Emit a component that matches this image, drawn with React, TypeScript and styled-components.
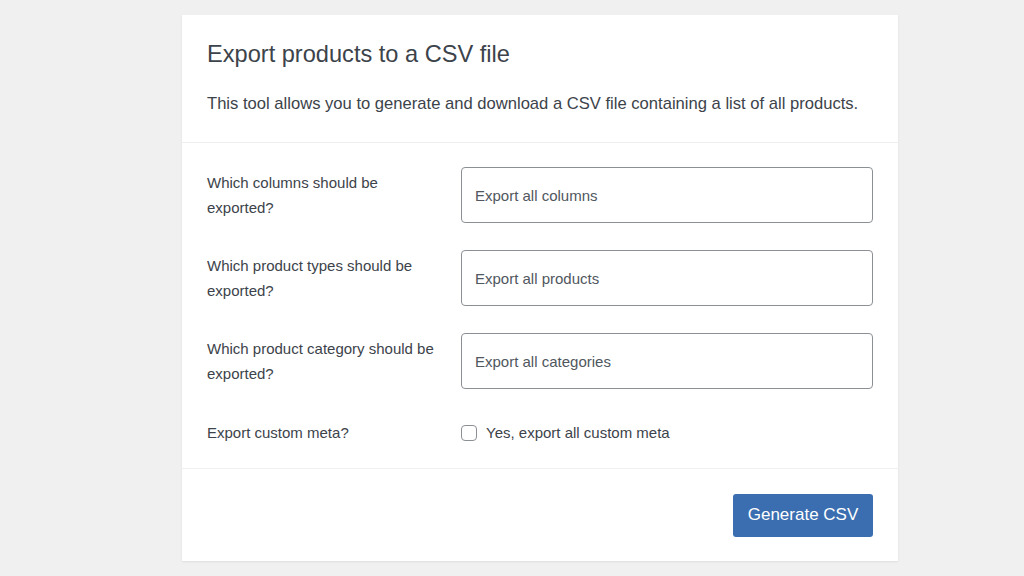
import styled, { createGlobalStyle } from "styled-components";

const Global = createGlobalStyle`
  body {
    margin: 0;
    background: #f0f0f1;
    font-family: "Liberation Sans", Arial, sans-serif;
    color: #3c434a;
  }
`;

const Page = styled.div`
  display: flex;
  justify-content: flex-start;
  padding: 15px 0 15px 182px;
`;

const Card = styled.div`
  width: 716px;
  height: 546px;
  box-sizing: border-box;
  background: #fff;
  box-shadow: 0 1px 2px rgba(0, 0, 0, 0.08);
  display: flex;
  flex-direction: column;
`;

const Header = styled.div`
  padding: 25px 25px 0;
  height: 128px;
  box-sizing: border-box;
  border-bottom: 1px solid #eeeeee;
`;

const Title = styled.h2`
  margin: 0;
  font-size: 23.6px;
  font-weight: 400;
  line-height: 28px;
  color: #3c434a;
`;

const Description = styled.p`
  margin: 26px 0 0;
  font-size: 16.6px;
  line-height: 20px;
`;

const Body = styled.div`
  padding: 24px 24px 0 25px;
  height: 326px;
  box-sizing: border-box;
  border-bottom: 1px solid #f0f0f0;
  display: flex;
  flex-direction: column;
  gap: 27px;
`;

const Row = styled.div<{ $compact?: boolean }>`
  display: grid;
  grid-template-columns: 254px 412px;
  align-items: center;
  min-height: ${(p) => (p.$compact ? "24px" : "56px")};
  margin-top: ${(p) => (p.$compact ? "4px" : "0")};
`;

const Label = styled.div`
  font-size: 15px;
  line-height: 25px;
  max-width: 232px;
`;

const Field = styled.div`
  height: 56px;
  box-sizing: border-box;
  border: 1px solid #8c8f94;
  border-radius: 4px;
  display: flex;
  align-items: center;
  padding: 0 13px;
  font-size: 15px;
  color: #50575e;
`;

const CheckLabel = styled.label`
  display: flex;
  align-items: center;
  gap: 9px;
  font-size: 15px;
`;

const Box = styled.span`
  width: 16px;
  height: 16px;
  border: 1px solid #8c8f94;
  border-radius: 4px;
  box-sizing: border-box;
`;

const Footer = styled.div`
  flex: 1;
  display: flex;
  justify-content: flex-end;
  align-items: center;
  padding-right: 25px;
`;

const Button = styled.button`
  width: 140px;
  height: 43px;
  border: none;
  border-radius: 3px;
  background: #3a6eb0;
  color: #fff;
  font-family: inherit;
  font-size: 17px;
`;

const rows = [
  ["Which columns should be exported?", "Export all columns"],
  ["Which product types should be exported?", "Export all products"],
  ["Which product category should be exported?", "Export all categories"],
];

export default function App() {
  return (
    <>
      <Global />
      <Page>
        <Card>
          <Header>
            <Title>Export products to a CSV file</Title>
            <Description>
              This tool allows you to generate and download a CSV file containing a list of all products.
            </Description>
          </Header>
          <Body>
            {rows.map(([label, value]) => (
              <Row key={label}>
                <Label>{label}</Label>
                <Field>{value}</Field>
              </Row>
            ))}
            <Row $compact>
              <Label>Export custom meta?</Label>
              <CheckLabel>
                <Box />
                Yes, export all custom meta
              </CheckLabel>
            </Row>
          </Body>
          <Footer>
            <Button>Generate CSV</Button>
          </Footer>
        </Card>
      </Page>
    </>
  );
}
